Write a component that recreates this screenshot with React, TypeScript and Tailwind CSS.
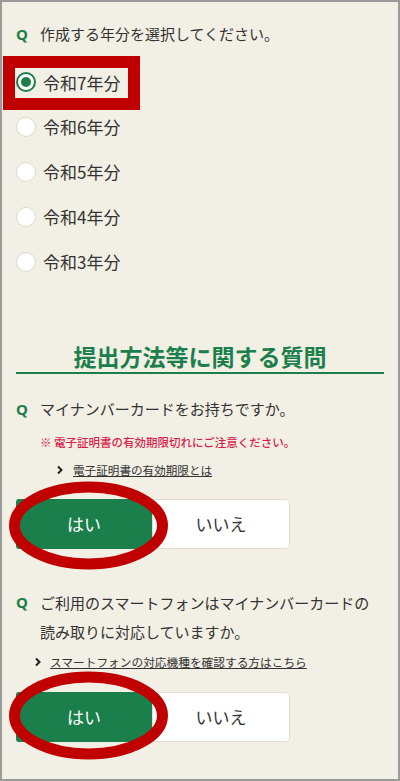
import React from "react";

type Year = { label: string; selected?: boolean };

const years: Year[] = [
  { label: "令和7年分", selected: true },
  { label: "令和6年分" },
  { label: "令和5年分" },
  { label: "令和4年分" },
  { label: "令和3年分" },
];

function Chevron() {
  return (
    <svg width="8" height="10" viewBox="0 0 8 10" className="shrink-0">
      <polyline points="2,1.5 5.5,5 2,8.5" fill="none" stroke="#222" strokeWidth="2" />
    </svg>
  );
}

function Radio({ selected }: { selected?: boolean }) {
  if (selected) {
    return (
      <span className="flex h-[20px] w-[20px] shrink-0 items-center justify-center rounded-full border-2 border-[#1b7f4b] bg-white">
        <span className="h-[10px] w-[10px] rounded-full bg-[#1b7f4b]" />
      </span>
    );
  }
  return <span className="h-[20px] w-[20px] shrink-0 rounded-full border border-[#dcd8cc] bg-white" />;
}

function Question({ children, className = "" }: { children: React.ReactNode; className?: string }) {
  return (
    <div className={`flex text-[15px] text-[#333] ${className}`}>
      <span className="w-6 shrink-0 font-['Noto_Sans',sans-serif] text-[15px] font-bold text-[#1b7f4b]">Q</span>
      <span>{children}</span>
    </div>
  );
}

function YesNo() {
  return (
    <div className="flex h-[50px] w-[274px] text-[17px]">
      <button type="button" className="flex-1 rounded-l-[3px] bg-[#1b7f4b] text-white">
        はい
      </button>
      <button type="button" className="flex-1 rounded-r-[4px] border border-[#e2ded3] bg-white text-[#333]">
        いいえ
      </button>
    </div>
  );
}

function Ellipse({ top }: { top: number }) {
  return (
    <svg
      width="160"
      height="90"
      viewBox="0 0 160 90"
      className="pointer-events-none absolute left-[7px]"
      style={{ top }}
    >
      <ellipse cx="79.5" cy="44.5" rx="74" ry="38.5" fill="none" stroke="#c00000" strokeWidth="11" />
    </svg>
  );
}

export default function App() {
  return (
    <div className="relative h-[781px] w-[400px] overflow-hidden border-2 border-[#9a9a9a] bg-[#f2efe4] font-['Noto_Sans_CJK_JP','Noto_Sans',sans-serif] text-[#333]">
      <div className="px-[14px] pt-[20px]">
        <Question className="h-6 items-center leading-6">作成する年分を選択してください。</Question>

        <div className="mt-[14px]">
          {years.map((y) => (
            <div key={y.label} className="flex h-[44.8px] items-center gap-[7px]">
              <Radio selected={y.selected} />
              <span className="text-[17px]">{y.label}</span>
            </div>
          ))}
        </div>

        <h2 className="mt-[57px] h-[33px] border-b-2 border-[#1b7f4b] text-center text-[23px] leading-[31px] font-bold text-[#1b7f4b]">
          提出方法等に関する質問
        </h2>

        <Question className="mt-[23px] h-6 items-center leading-6">マイナンバーカードをお持ちですか。</Question>
        <p className="mt-[11px] h-5 pl-6 text-[11.5px] leading-5 font-medium text-[#d81f4c]">
          ※&nbsp;電子証明書の有効期限切れにご注意ください。
        </p>
        <div className="mt-[8px] flex h-5 items-center gap-[9px] pl-[40px] text-[11.6px] leading-5">
          <Chevron />
          <a className="underline">電子証明書の有効期限とは</a>
        </div>
        <div className="mt-[19px]">
          <YesNo />
        </div>

        <Question className="mt-[39px] leading-[29px]">
          ご利用のスマートフォンはマイナンバーカードの読み取りに対応していますか。
        </Question>
        <div className="mt-[6px] flex h-5 items-center gap-[8px] pl-[18px] text-[11.7px] leading-5">
          <Chevron />
          <a className="underline">スマートフォンの対応機種を確認する方はこちら</a>
        </div>
        <div className="mt-[20px]">
          <YesNo />
        </div>
      </div>

      <div className="pointer-events-none absolute left-[1px] top-[54px] h-[54px] w-[137px] border-[12px] border-[#c00000]" />
      <Ellipse top={479} />
      <Ellipse top={669} />
    </div>
  );
}
